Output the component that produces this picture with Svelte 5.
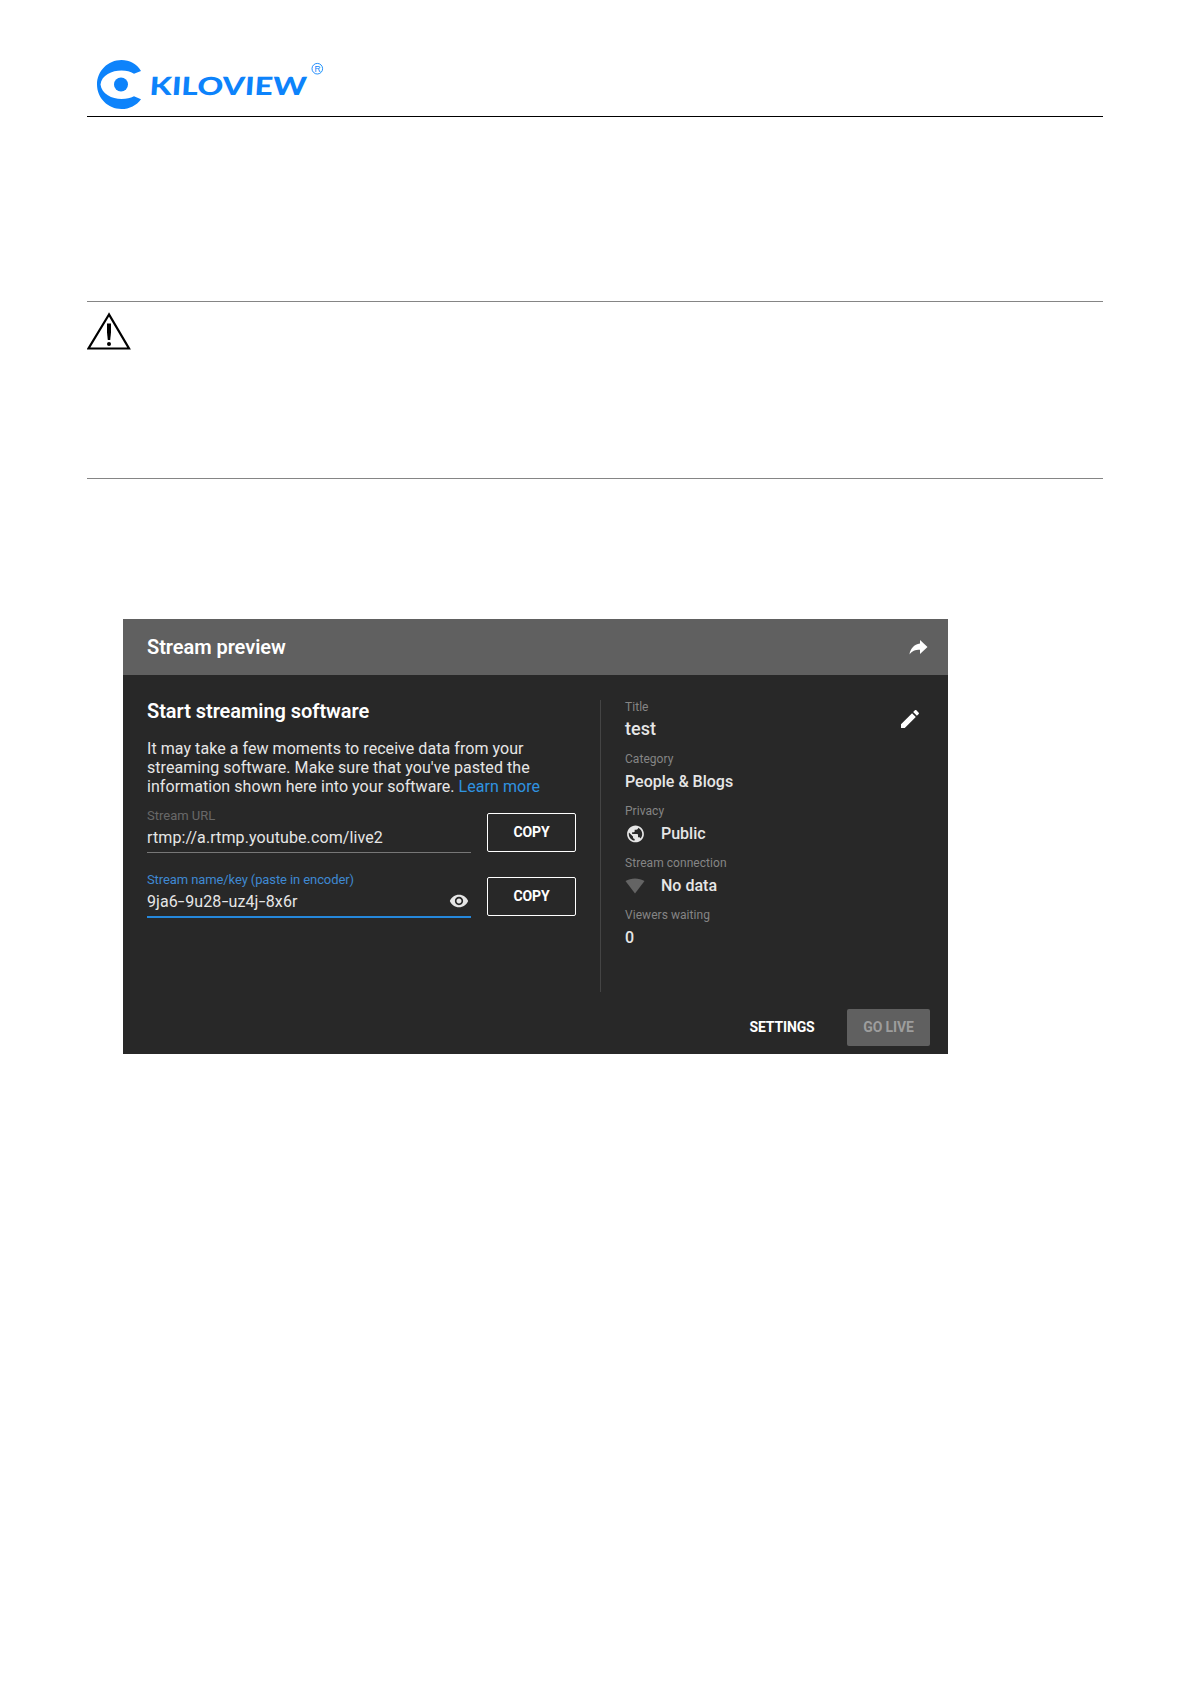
<script>
    const details = [
        {label: 'Title', value: 'test', big: true},
        {label: 'Category', value: 'People & Blogs'},
        {label: 'Privacy', value: 'Public', icon: 'globe'},
        {label: 'Stream connection', value: 'No data', icon: 'signal'},
        {label: 'Viewers waiting', value: '0'}
    ];
</script>

<main class="page">
    <header class="page-header">
        <svg class="logo" width="240" height="60" viewBox="90 56 240 60" role="img" aria-label="Kiloview">
            <path d="M141 71C136.500 63.500 129.500 60 121.500 60C108 60 97 71 97 84.500S108 109 121.500 109C129.500 109 136.500 105.500 141 99.200L134 96.300C130 98.300 127 99 121.500 99C112 99 101.500 94 100.500 84.500C101.500 75 112 70.500 121.500 70.500C127 70.500 130 71.500 134 73.700Z"/>
            <circle cx="121" cy="84.500" r="7"/>
            <text class="brand" transform="translate(149 95.300) skewX(-4)" textLength="157"
                  lengthAdjust="spacingAndGlyphs">KILOVIEW</text>
            <circle class="ring" cx="317.300" cy="68.700" r="5.300"/>
            <text class="reg" x="314.400" y="71.900">R</text>
        </svg>
    </header>

    <section class="note">
        <svg width="46" height="42" viewBox="0 0 46 42" role="img" aria-label="Caution">
            <path class="triangle" d="M22 3.500L1.500 37.500H42Z"/>
            <path d="M20 12.500h4v9l-.8 7.500h-2.400l-.8-7.500Z"/>
            <circle cx="22" cy="33" r="2"/>
        </svg>
    </section>

    <section class="panel">
        <div class="panel-top">
            <h2>Stream preview</h2>
            <svg class="share" width="22" height="20" viewBox="0 0 22 20">
                <path d="M12 6.500V3L19.500 10L12 17V12.800C7 12.800 4 14 1.500 17.500C2.300 11.500 6 7.500 12 6.500Z"/>
            </svg>
        </div>
        <div class="panel-body">
            <div class="setup">
                <h3>Start streaming software</h3>
                <p>
                    It may take a few moments to receive data from your<br>
                    streaming software. Make sure that you've pasted the<br>
                    information shown here into your software. <a href="#learn">Learn more</a>
                </p>
                <div class="field-row">
                    <div class="field">
                        <span class="label">Stream URL</span>
                        <span class="value">rtmp://a.rtmp.youtube.com/live2</span>
                    </div>
                    <button class="copy">COPY</button>
                </div>
                <div class="field-row">
                    <div class="field active">
                        <span class="label">Stream name/key (paste in encoder)</span>
                        <span class="value">
                            <span>9ja6<i>-</i>9u28<i>-</i>uz4j<i>-</i>8x6r</span>
                            <svg width="20" height="20" viewBox="0 0 24 24">
                                <path d="M12 4.500C7 4.500 2.730 7.610 1 12c1.730 4.390 6 7.500 11 7.500s9.270-3.110 11-7.500c-1.730-4.390-6-7.500-11-7.500zM12 17c-2.760 0-5-2.240-5-5s2.240-5 5-5 5 2.240 5 5-2.240 5-5 5zm0-8c-1.660 0-3 1.340-3 3s1.340 3 3 3 3-1.340 3-3-1.340-3-3-3z"/>
                            </svg>
                        </span>
                    </div>
                    <button class="copy">COPY</button>
                </div>
            </div>
            <div class="details">
                <div class="detail-list">
                    {#each details as item}
                        <div class="detail">
                            <span class="label">{item.label}</span>
                            <span class="value" class:big={item.big}>
                                {#if item.icon === 'globe'}
                                    <svg width="21" height="21" viewBox="-.5 -1 25 25">
                                        <path d="M12 2C6.480 2 2 6.480 2 12s4.480 10 10 10 10-4.480 10-10S17.520 2 12 2zm-1 17.930c-3.950-.49-7-3.850-7-7.930 0-.62.08-1.210.21-1.790L9 15v1c0 1.100.9 2 2 2v1.930zm6.900-2.540c-.26-.81-1-1.390-1.900-1.390h-1v-3c0-.55-.45-1-1-1H8v-2h2c.55 0 1-.45 1-1V7h2c1.100 0 2-.9 2-2v-.41c2.930 1.190 5 4.060 5 7.410 0 2.080-.8 3.970-2.100 5.390z"/>
                                    </svg>
                                {:else if item.icon === 'signal'}
                                    <svg class="dim" width="21" height="21" viewBox="0 0 21 21">
                                        <path d="M.5 6C6 2.500 14 2.500 19.500 6L10 18.500Z"/>
                                    </svg>
                                {/if}
                                {item.value}
                            </span>
                        </div>
                    {/each}
                </div>
                <svg class="edit" width="24" height="24" viewBox="0 0 24 24">
                    <path d="M3 17.250V21h3.750L17.810 9.940l-3.750-3.750L3 17.250zM20.710 7.040c.39-.39.39-1.020 0-1.410l-2.340-2.340c-.39-.39-1.020-.39-1.410 0l-1.830 1.830 3.750 3.750 1.830-1.830z"/>
                </svg>
            </div>
        </div>
        <div class="panel-actions">
            <button class="settings">SETTINGS</button>
            <button class="live" disabled>GO LIVE</button>
        </div>
    </section>
</main>

<style>
    :global(body) {
        background: #fff;
    }

    .page {
        box-sizing: border-box;
        width: 1191px;
        height: 1684px;
        padding: 56px 88px 0 87px;
        font-family: Roboto, "Liberation Sans", sans-serif;
    }

    .page-header {
        height: 60px;
        padding-left: 3px;
        border-bottom: 1px solid #000;
    }

    svg {
        display: block;
        flex-shrink: 0;
        fill: currentColor;
    }

    .logo {
        color: #0d83fb;
    }

    .brand {
        font: 900 25px Lato, sans-serif;
    }

    .ring {
        fill: none;
        stroke: currentColor;
        stroke-width: .9;
    }

    .reg {
        font: 8.500px "Liberation Sans", sans-serif;
    }

    .note {
        box-sizing: border-box;
        height: 178px;
        margin-top: 184px;
        padding-top: 9px;
        border-top: 1px solid #858585;
        border-bottom: 1px solid #858585;
    }

    .triangle {
        fill: none;
        stroke: #000;
        stroke-width: 2.200;
    }

    .panel {
        width: 825px;
        height: 435px;
        margin: 140px 0 0 36px;
        background: #282828;
        color: #e6e6e6;
    }

    .panel-top {
        box-sizing: border-box;
        display: flex;
        align-items: center;
        justify-content: space-between;
        height: 56px;
        padding: 0 18px 0 24px;
        background: #606060;
        color: #fff;
    }

    h2, h3 {
        margin: 0;
        color: #fff;
        font-size: 20px;
        font-weight: 600;
        line-height: 24px;
        letter-spacing: -.05px;
    }

    .panel-body {
        box-sizing: border-box;
        display: flex;
        height: 317px;
        padding: 25px 18px 0 24px;
    }

    .setup {
        width: 429px;
    }

    h3 {
        margin-top: -1px;
    }

    p {
        margin: 16px 0 0;
        font-size: 16px;
        line-height: 19px;
        letter-spacing: .055px;
        white-space: nowrap;
    }

    a {
        color: #2f93e0;
        text-decoration: none;
    }

    .field-row {
        display: flex;
        gap: 16px;
        height: 64px;
    }

    p + .field-row {
        margin-top: 12px;
    }

    .field {
        box-sizing: border-box;
        width: 324px;
        height: 45px;
        border-bottom: 1px solid #777;
    }

    .label {
        display: block;
        color: #858585;
        font-size: 12px;
        line-height: 16px;
        letter-spacing: .05px;
        white-space: nowrap;
    }

    .field .label {
        color: #686868;
        font-size: 13px;
        letter-spacing: 0;
    }

    .value {
        display: flex;
        align-items: center;
        height: 24px;
        margin-top: 2px;
        font-size: 16px;
        font-weight: 500;
        white-space: nowrap;
    }

    .field .value {
        justify-content: space-between;
        margin-top: 1px;
        padding-right: 2px;
        font-weight: 400;
        letter-spacing: .1px;
    }

    i {
        display: inline-block;
        margin: 0 1.350px;
        font-style: normal;
        transform: scaleX(1.500);
    }

    .field.active {
        height: 46px;
        border-bottom: 2px solid #2588dc;
    }

    .field.active .label {
        color: #3f89d2;
        letter-spacing: -.1px;
    }

    button {
        box-sizing: border-box;
        padding: 0 0 1px;
        border: 0;
        background: none;
        color: #fff;
        font: 700 14px Roboto, sans-serif;
        letter-spacing: -.15px;
    }

    .copy {
        width: 89px;
        height: 39px;
        margin-top: 5px;
        border: 1px solid #fff;
        border-radius: 2px;
    }

    .details {
        box-sizing: border-box;
        display: flex;
        justify-content: space-between;
        flex: 1;
        margin-left: 24px;
        padding: 0 8px 0 24px;
        border-left: 1px solid #444;
    }

    .detail {
        height: 52px;
        margin-top: -1px;
        margin-bottom: 1px;
    }

    .detail .value {
        gap: 15px;
    }

    .detail .big {
        margin-top: 1px;
        font-size: 18px;
    }

    .dim {
        color: #646464;
    }

    .edit {
        margin-top: 7px;
        color: #fff;
    }

    .panel-actions {
        display: flex;
        justify-content: flex-end;
        gap: 16px;
        padding: 17px 18px 0 0;
    }

    .settings {
        width: 98px;
        height: 37px;
    }

    .live {
        width: 83px;
        height: 37px;
        border-radius: 2px;
        background: #606060;
        color: #9d9d9d;
    }
</style>
